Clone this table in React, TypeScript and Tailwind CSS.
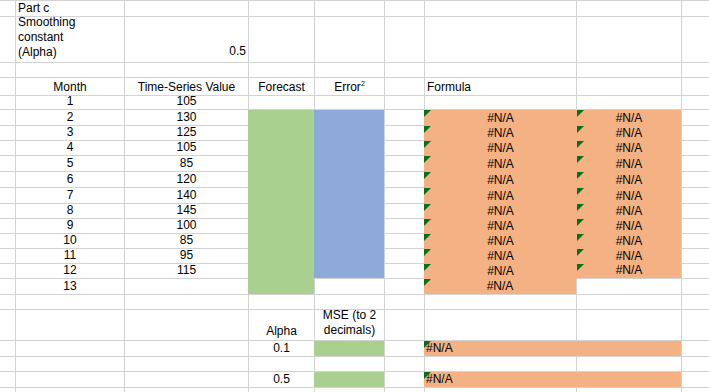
import type { ReactNode } from "react";
import clsx from "clsx";

// sheet colours
const GREEN = "bg-[#a9d08e]";
const BLUE = "bg-[#8eaadb]";
const ORANGE = "bg-[#f4b183]";

const values = [105, 130, 125, 105, 85, 120, 140, 145, 100, 85, 95, 115];

function Cell({
  fill = "bg-white",
  className,
  children
}: {
  fill?: string;
  className?: string;
  children?: ReactNode;
}) {
  return <div className={clsx("relative flex items-end leading-[15px]", fill, className)}>{children}</div>;
}

function Blank({ n }: { n: number }) {
  return (
    <>
      {Array.from({ length: n }, (_, i) => (
        <Cell key={i} />
      ))}
    </>
  );
}

function Flag() {
  return <span className="absolute left-0 top-0 h-[7px] w-[7px] bg-[#0e6d1b] [clip-path:polygon(0_0,100%_0,0_100%)]" />;
}

function NA({ className, left = false }: { className?: string; left?: boolean }) {
  return (
    <Cell fill={ORANGE} className={clsx(left ? "pl-[2px]" : "justify-center", className)}>
      <Flag />
      <span className="relative">#N/A</span>
    </Cell>
  );
}

export default function App() {
  return (
    <div className="h-screen w-full overflow-hidden bg-white font-['Liberation_Sans',Arial,sans-serif] text-[12px] text-black">
      <div className="grid grid-cols-[15px_108px_123px_65px_69px_39px_151px_104px_1fr] grid-rows-[15px_45px_14px_17px_13px_15px_14px_14px_15px_15px_15px_14px_14px_14px_14px_14px_15px_14px_30px_15px_14px_15px_20px] gap-px bg-[#d3d3d3] pt-px">
        {/* Part c */}
        <Cell />
        <Cell className="pl-[2px]">Part c</Cell>
        <Blank n={7} />

        {/* smoothing constant */}
        <Cell />
        <Cell className="pb-[2px] pl-[2px] leading-[14px]">
          <span>
            Smoothing
            <br />
            constant
            <br />
            (Alpha)
          </span>
        </Cell>
        <Cell className="justify-end pb-[3px] pr-[2px]">0.5</Cell>
        <Blank n={6} />

        <Blank n={9} />

        {/* headers */}
        <Cell />
        <Cell className="justify-center">Month</Cell>
        <Cell className="justify-center">Time-Series Value</Cell>
        <Cell className="justify-center">Forecast</Cell>
        <Cell className="justify-center">
          <span>
            Error<sup className="-top-[5px] text-[7px] leading-none">2</sup>
          </span>
        </Cell>
        <Cell />
        <Cell className="pl-[2px]">Formula</Cell>
        <Blank n={2} />

        {/* month 1 */}
        <Cell />
        <Cell className="justify-center">1</Cell>
        <Cell className="justify-center">{values[0]}</Cell>
        <Blank n={6} />

        {/* month 2: starts the filled blocks */}
        <Cell />
        <Cell className="justify-center">2</Cell>
        <Cell className="justify-center">{values[1]}</Cell>
        <Cell fill={GREEN} className="row-span-12 -ml-px" />
        <Cell fill={BLUE} className="row-span-11 -ml-px" />
        <Cell />
        <NA className="-mb-px -ml-px -mr-px" />
        <NA className="-mb-px" />
        <Cell />

        {values.slice(2).map((v, i) => (
          <div key={v + "-" + i} className="contents">
            <Cell />
            <Cell className="justify-center">{i + 3}</Cell>
            <Cell className="justify-center">{v}</Cell>
            <Cell />
            <NA className="-mb-px -ml-px -mr-px" />
            <NA className={i === 9 ? "" : "-mb-px"} />
            <Cell />
          </div>
        ))}

        {/* month 13 */}
        <Cell />
        <Cell className="justify-center">13</Cell>
        <Cell />
        <Cell />
        <Cell />
        <NA className="-ml-px" />
        <Blank n={2} />

        <Blank n={9} />

        {/* MSE table */}
        <Blank n={3} />
        <Cell className="justify-center pb-[1px]">Alpha</Cell>
        <Cell className="justify-center pb-[2px] text-center leading-[14px]">
          <span>
            MSE (to 2
            <br />
            decimals)
          </span>
        </Cell>
        <Blank n={4} />

        <Blank n={3} />
        <Cell className="justify-center">0.1</Cell>
        <Cell fill={GREEN} className="-ml-px" />
        <Cell />
        <NA left className="col-span-2 -ml-px" />
        <Cell />

        <Blank n={9} />

        <Blank n={3} />
        <Cell className="justify-center">0.5</Cell>
        <Cell fill={GREEN} className="-ml-px" />
        <Cell />
        <NA left className="col-span-2 -ml-px" />
        <Cell />

        <Blank n={9} />
      </div>
    </div>
  );
}
